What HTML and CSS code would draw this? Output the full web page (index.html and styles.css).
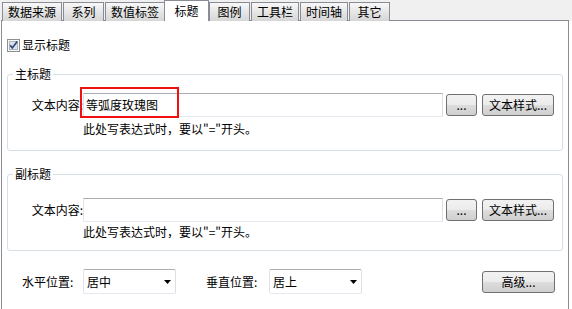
FILE: index.html
```html
<!DOCTYPE html>
<html lang="zh-CN">
<head>
<meta charset="UTF-8" />
<title>标题</title>
<link rel="stylesheet" href="styles.css">
</head>
<body>

<div class="tabs">
  <div class="tab">数据来源</div>
  <div class="tab">系列</div>
  <div class="tab">数值标签</div>
  <div class="tab active">标题</div>
  <div class="tab">图例</div>
  <div class="tab">工具栏</div>
  <div class="tab">时间轴</div>
  <div class="tab">其它</div>
</div>

<div class="panel">
  <label class="check">
    <svg width="13" height="13" viewBox="0 0 13 13">
      <rect x="0.5" y="0.5" width="12" height="12" fill="#f6f6f6" stroke="#8e8f8f"/>
      <rect x="2.5" y="2.5" width="8" height="8" fill="#dde2ea" stroke="#b0b5bd"/>
      <path d="M3.2 6.3l2.1 2.6L10.2 2.6" fill="none" stroke="#2c4580" stroke-width="1.7"/>
    </svg>
    显示标题
  </label>

  <fieldset class="group group-main">
    <legend>主标题</legend>
    <div class="row">
      <span class="lbl">文本内容:</span>
      <div class="field">等弧度玫瑰图<span class="mark"></span></div>
      <button class="btn btn-dots">...</button>
      <button class="btn btn-style">文本样式...</button>
    </div>
    <div class="hint">此处写表达式时，要以&quot;=&quot;开头。</div>
  </fieldset>

  <fieldset class="group group-sub">
    <legend>副标题</legend>
    <div class="row">
      <span class="lbl">文本内容:</span>
      <div class="field"></div>
      <button class="btn btn-dots">...</button>
      <button class="btn btn-style">文本样式...</button>
    </div>
    <div class="hint">此处写表达式时，要以&quot;=&quot;开头。</div>
  </fieldset>

  <div class="pos-row">
    <span class="pos-lbl">水平位置:</span>
    <div class="select">居中
      <svg width="7" height="4" viewBox="0 0 7 4"><path d="M0 0h7L3.5 4z"/></svg>
    </div>
    <span class="pos-lbl pos-lbl-v">垂直位置:</span>
    <div class="select">居上
      <svg width="7" height="4" viewBox="0 0 7 4"><path d="M0 0h7L3.5 4z"/></svg>
    </div>
    <button class="btn btn-adv">高级...</button>
  </div>
</div>

</body>
</html>
```

FILE: styles.css
```css
  body {
    margin: 0;
    background: #fff;
    font-family: "Noto Sans CJK SC", "Liberation Sans", sans-serif;
    font-size: 12px;
    line-height: 14px;
    color: #000;
  }
  .tabs {
    display: flex;
    align-items: flex-end;
    height: 21px;
    padding-left: 2px;
    background: #f0f0f0;
  }
  .tab {
    box-sizing: border-box;
    height: 19px;
    min-width: 41px;
    padding: 0 5px 1px;
    margin-right: 1px;
    border: 1px solid #898c95;
    border-bottom: none;
    background: linear-gradient(#f8f8f8, #e6e6e6 50%, #d6d6d6);
    line-height: 17px;
    text-align: center;
  }
  .tab.active {
    position: relative;
    z-index: 1;
    height: 21px;
    width: 45px;
    margin-left: -2px;
    margin-right: 0;
    padding: 0;
    background: #fff;
    line-height: 19px;
  }
  .panel {
    box-sizing: border-box;
    width: 568px;
    height: 300px;
    margin: -1px 0 0 1px;
    padding: 17px 5px 0;
    border: 1px solid #898c95;
    background: #fff;
  }
  .check {
    display: flex;
    align-items: center;
    gap: 2px;
    height: 14px;
  }
  .group {
    margin: 15px 0 0;
    padding: 12px 0 14px;
    border: 1px solid #d5dfe5;
    border-radius: 3px;
    min-width: 0;
  }
  .group-sub {
    margin-top: 16px;
    padding: 17px 0 11px;
  }
  .group legend {
    margin-left: 5px;
    padding: 0 2px;
    line-height: 14px;
  }
  .row {
    display: flex;
    align-items: center;
    height: 24px;
  }
  .lbl {
    width: 75px;
    text-align: right;
  }
  .field {
    position: relative;
    box-sizing: border-box;
    width: 360px;
    height: 24px;
    padding-left: 2px;
    border: 1px solid;
    border-color: #abadb3 #dbdfe6 #e3e9ef #e2e3ea;
    line-height: 22px;
  }
  .mark {
    position: absolute;
    left: -4px;
    top: -7px;
    width: 99px;
    height: 31px;
    box-sizing: border-box;
    border: 2px solid #f01010;
  }
  .btn {
    box-sizing: border-box;
    height: 22px;
    padding: 0;
    border: 1px solid #707070;
    border-radius: 3px;
    background: linear-gradient(#f2f2f2, #ebebeb 50%, #dddddd 50%, #cfcfcf);
    font: inherit;
    color: #000;
  }
  .btn-dots {
    width: 31px;
    margin-left: 3px;
  }
  .btn-style {
    width: 72px;
    margin-left: 5px;
  }
  .hint {
    margin-top: 5px;
    padding-left: 75px;
  }
  .group-sub .hint {
    margin-top: 3px;
  }
  .pos-row {
    display: flex;
    align-items: center;
    height: 25px;
    margin-top: 18px;
    padding: 0 8px 0 15px;
  }
  .pos-lbl {
    width: 61px;
  }
  .pos-lbl-v {
    width: 63px;
    margin-left: 30px;
  }
  .select {
    box-sizing: border-box;
    display: flex;
    align-items: center;
    justify-content: space-between;
    width: 93px;
    height: 25px;
    padding: 0 4px 0 3px;
    border: 1px solid;
    border-color: #abadb3 #dbdfe6 #e3e9ef #e2e3ea;
    border-radius: 2px;
  }
  .btn-adv {
    width: 73px;
    margin-left: auto;
  }
```
